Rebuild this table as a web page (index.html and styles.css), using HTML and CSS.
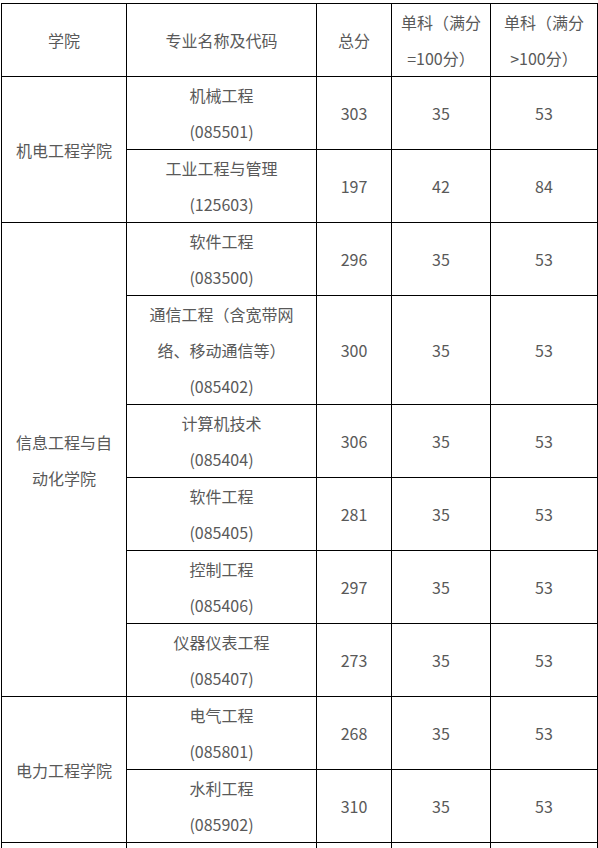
FILE: index.html
```html
<!DOCTYPE html>
<html lang="zh-CN">
<head>
<meta charset="utf-8">
<link rel="stylesheet" href="styles.css">
</head>
<body>
<div class="wrap">
<table class="score">
  <colgroup>
    <col class="c1"><col class="c2"><col class="c3"><col class="c4"><col class="c5">
  </colgroup>
  <tr>
    <td>学院</td>
    <td>专业名称及代码</td>
    <td>总分</td>
    <td>单科（满分<br>=100分）</td>
    <td>单科（满分<br>&gt;100分）</td>
  </tr>
  <tr>
    <td rowspan="2">机电工程学院</td>
    <td>机械工程<br>(085501)</td>
    <td>303</td><td>35</td><td>53</td>
  </tr>
  <tr>
    <td>工业工程与管理<br>(125603)</td>
    <td>197</td><td>42</td><td>84</td>
  </tr>
  <tr>
    <td rowspan="6">信息工程与自<br>动化学院</td>
    <td>软件工程<br>(083500)</td>
    <td>296</td><td>35</td><td>53</td>
  </tr>
  <tr>
    <td>通信工程（含宽带网<br>络、移动通信等）<br>(085402)</td>
    <td>300</td><td>35</td><td>53</td>
  </tr>
  <tr>
    <td>计算机技术<br>(085404)</td>
    <td>306</td><td>35</td><td>53</td>
  </tr>
  <tr>
    <td>软件工程<br>(085405)</td>
    <td>281</td><td>35</td><td>53</td>
  </tr>
  <tr>
    <td>控制工程<br>(085406)</td>
    <td>297</td><td>35</td><td>53</td>
  </tr>
  <tr>
    <td>仪器仪表工程<br>(085407)</td>
    <td>273</td><td>35</td><td>53</td>
  </tr>
  <tr>
    <td rowspan="2">电力工程学院</td>
    <td>电气工程<br>(085801)</td>
    <td>268</td><td>35</td><td>53</td>
  </tr>
  <tr>
    <td>水利工程<br>(085902)</td>
    <td>310</td><td>35</td><td>53</td>
  </tr>
  <tr class="tail">
    <td></td><td></td><td></td><td></td><td></td>
  </tr>
</table>
</div>
</body>
</html>
```
FILE: styles.css
```css
html, body {
  margin: 0;
  padding: 0;
  background: #ffffff;
}
.wrap {
  padding: 3px 0 0 1px;
}
.score {
  border-collapse: collapse;
  table-layout: fixed;
  width: 596px;
  font-family: "Noto Sans CJK SC", "Microsoft YaHei", sans-serif;
  font-size: 16px;
  color: #595959;
}
.c1 { width: 125px; }
.c2 { width: 190px; }
.c3 { width: 75px; }
.c4 { width: 99px; }
.c5 { width: 107px; }
.score td {
  border: 1px solid #000000;
  padding: 0 4px;
  line-height: 36px;
  height: 72px;
  text-align: center;
  vertical-align: middle;
  white-space: nowrap;
}
.score tr.tail td {
  height: 72px;
}
```
